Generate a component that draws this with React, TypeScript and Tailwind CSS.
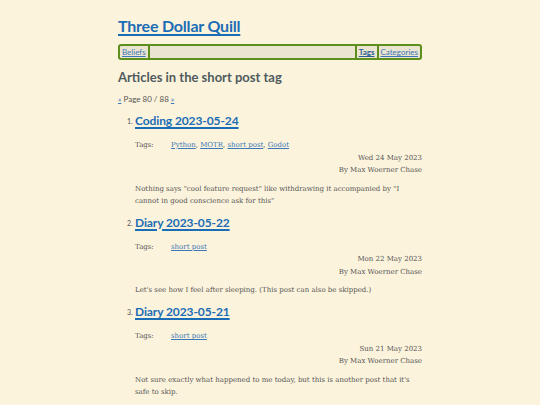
import React from 'react';

type Post = {
  title: string;
  tags: string[];
  date: string;
  summary: string;
};

const posts: Post[] = [
  {
    title: 'Coding 2023-05-24',
    tags: ['Python', 'MOTR', 'short post', 'Godot'],
    date: 'Wed 24 May 2023',
    summary:
      'Nothing says "cool feature request" like withdrawing it accompanied by "I cannot in good conscience ask for this"',
  },
  {
    title: 'Diary 2023-05-22',
    tags: ['short post'],
    date: 'Mon 22 May 2023',
    summary: "Let's see how I feel after sleeping. (This post can also be skipped.)",
  },
  {
    title: 'Diary 2023-05-21',
    tags: ['short post'],
    date: 'Sun 21 May 2023',
    summary:
      "Not sure exactly what happened to me today, but this is another post that it's safe to skip.",
  },
];

const sans = "font-['Lato','Noto_Sans',sans-serif]";
const serif = "font-['DejaVu_Serif','Liberation_Serif',serif]";

function Sep() {
  return <span className="mx-[1px] h-[12px] w-[2px] bg-[#5d8f1c]" />;
}

export default function App() {
  return (
    <div className="min-h-[405px] bg-[#fcf3dc] text-[#555]">
      <div className="mx-auto w-[304px] pt-[14px]">
        <h1 className={`${sans} text-[16px] font-bold leading-[24px] tracking-[-0.2px]`}>
          <a href="#" className="text-[#1b6db5] underline decoration-2 underline-offset-2">
            Three Dollar Quill
          </a>
        </h1>

        {/* nav */}
        <nav
          className={`${sans} mt-[6px] flex h-[16px] items-center rounded-[3px] border-2 border-[#5d8f1c] bg-[#ebe4d0] px-[1px] text-[8px]`}
        >
          <a href="#" className="px-[1px] text-[#3b78b8] underline">
            Beliefs
          </a>
          <Sep />
          <span className="flex-1" />
          <Sep />
          <a href="#" className="px-[1px] font-bold text-[#2c5f96] underline">
            Tags
          </a>
          <Sep />
          <a href="#" className="px-[1px] text-[#3b78b8] underline">
            Categories
          </a>
        </nav>

        <h2 className={`${sans} mt-[8px] text-[13px] font-bold leading-[18px] text-[#4f5b60]`}>
          Articles in the short post tag
        </h2>

        <p className={`${sans} mt-[7px] text-[8px] leading-[12px]`}>
          <a href="#" className="text-[#3b78b8] underline">«</a> Page 80 / 88{' '}
          <a href="#" className="text-[#3b78b8] underline">»</a>
        </p>

        <ol className="mt-[6px] pl-[17px]">
          {posts.map((p, i) => (
            <li key={p.title} className="mb-[6px] flex">
              <span className={`${sans} w-[0px] shrink-0 -translate-x-[8px] pt-[4px] text-[7px] leading-[12px]`}>
                {i + 1}.
              </span>
              <div className="flex-1">
                <h3 className={`${sans} text-[12px] font-bold leading-[20px] tracking-[-0.1px]`}>
                  <a href="#" className="text-[#1b6db5] underline decoration-[1.5px] underline-offset-2">
                    {p.title}
                  </a>
                </h3>
                <div className={`${serif} mt-[8px] text-[7px] leading-[12.5px]`}>
                  <div className="flex">
                    <span className="w-[36px]">Tags:</span>
                    <span>
                      {p.tags.map((t, j) => (
                        <React.Fragment key={t}>
                          <a href="#" className="text-[#3b78b8] underline">
                            {t}
                          </a>
                          {j < p.tags.length - 1 ? ', ' : ''}
                        </React.Fragment>
                      ))}
                    </span>
                  </div>
                  <div className="text-right">{p.date}</div>
                  <div className="text-right">By Max Woerner Chase</div>
                  <p className="mt-[6px] leading-[12px]">{p.summary}</p>
                </div>
              </div>
            </li>
          ))}
        </ol>
      </div>
    </div>
  );
}
